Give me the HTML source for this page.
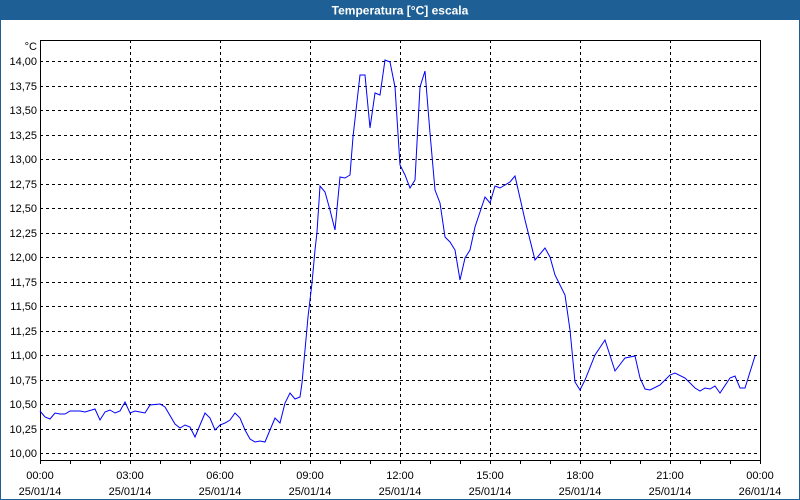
<!DOCTYPE html>
<html><head><meta charset="utf-8"><style>
html,body{margin:0;padding:0;width:800px;height:500px;overflow:hidden;background:#fff}
svg{display:block}
text{font-family:"Liberation Sans",sans-serif;font-size:11px;fill:#000}
</style></head><body>
<svg width="800" height="500" viewBox="0 0 800 500" xmlns="http://www.w3.org/2000/svg">
<rect x="0" y="0" width="800" height="500" fill="#fff"/>
<rect x="0" y="0" width="800" height="20" fill="#1e6096"/>
<rect x="0" y="20" width="1" height="480" fill="#1e6096"/>
<rect x="799" y="20" width="1" height="480" fill="#1e6096"/>
<rect x="0" y="499" width="800" height="1" fill="#1e6096"/>
<text x="400" y="14.5" text-anchor="middle" style="fill:#fff;font-weight:bold;font-size:12px">Temperatura [°C] escala</text>
<g stroke="#000" stroke-dasharray="3,3" stroke-width="1" shape-rendering="crispEdges">
<line x1="40" x2="760" y1="61.5" y2="61.5"/><line x1="40" x2="760" y1="86.5" y2="86.5"/><line x1="40" x2="760" y1="110.5" y2="110.5"/><line x1="40" x2="760" y1="135.5" y2="135.5"/><line x1="40" x2="760" y1="159.5" y2="159.5"/><line x1="40" x2="760" y1="184.5" y2="184.5"/><line x1="40" x2="760" y1="208.5" y2="208.5"/><line x1="40" x2="760" y1="233.5" y2="233.5"/><line x1="40" x2="760" y1="257.5" y2="257.5"/><line x1="40" x2="760" y1="282.5" y2="282.5"/><line x1="40" x2="760" y1="306.5" y2="306.5"/><line x1="40" x2="760" y1="331.5" y2="331.5"/><line x1="40" x2="760" y1="355.5" y2="355.5"/><line x1="40" x2="760" y1="380.5" y2="380.5"/><line x1="40" x2="760" y1="404.5" y2="404.5"/><line x1="40" x2="760" y1="429.5" y2="429.5"/><line x1="40" x2="760" y1="453.5" y2="453.5"/>
<line x1="130.5" x2="130.5" y1="40" y2="460"/><line x1="220.5" x2="220.5" y1="40" y2="460"/><line x1="310.5" x2="310.5" y1="40" y2="460"/><line x1="400.5" x2="400.5" y1="40" y2="460"/><line x1="490.5" x2="490.5" y1="40" y2="460"/><line x1="580.5" x2="580.5" y1="40" y2="460"/><line x1="670.5" x2="670.5" y1="40" y2="460"/>
</g>
<g stroke="#000" stroke-width="1" fill="none" shape-rendering="crispEdges">
<rect x="40.5" y="40.5" width="720" height="420"/>
<path d="M40.5 460v4M70.5 460v4M100.5 460v4M130.5 460v4M160.5 460v4M190.5 460v4M220.5 460v4M250.5 460v4M280.5 460v4M310.5 460v4M340.5 460v4M370.5 460v4M400.5 460v4M430.5 460v4M460.5 460v4M490.5 460v4M520.5 460v4M550.5 460v4M580.5 460v4M610.5 460v4M640.5 460v4M670.5 460v4M700.5 460v4M730.5 460v4M760.5 460v4"/>
</g>
<polyline fill="none" stroke="#0000ff" stroke-width="1" points="40,411 45,417 50,419 55,413 60,414 65,414 70,411 80,411 85,412 95,409 100,420 105,412 110,410 115,413 120,411 125,402 130,413 135,411 140,412 145,413 150,405 160,404 165,407 175,424 180,428 185,425 190,427 195,437 205,413 210,418 215,430 220,425 225,423 230,420 235,413 240,418 245,430 250,439 255,442 260,441 265,442 270,430 275,418 280,423 285,403 290,393 295,399 300,397 302,383 305,350 308,317 312,283 315,250 317,232 320,186 325,192 330,210 335,230 340,177 345,178 350,175 353,137 360,75 365,75 370,128 375,93 380,95 385,60 390,62 395,87 400,165 405,175 410,188 415,180 420,87 425,71 430,133 435,190 440,203 445,237 450,242 455,250 460,280 465,258 470,250 475,227 485,197 490,203 495,186 500,188 510,182 515,176 525,220 535,260 545,248 550,257 555,275 565,295 570,330 575,382 580,390 585,380 595,355 605,340 615,371 625,358 635,356 640,378 645,389 650,390 660,385 670,375 675,373 685,378 695,388 700,391 705,388 710,389 715,386 720,393 730,378 735,376 740,388 745,388 755,356"/>
<g text-anchor="end">
<text x="37" y="50">°C</text>
<text x="37" y="65">14,00</text><text x="37" y="90">13,75</text><text x="37" y="114">13,50</text><text x="37" y="139">13,25</text><text x="37" y="163">13,00</text><text x="37" y="188">12,75</text><text x="37" y="212">12,50</text><text x="37" y="237">12,25</text><text x="37" y="261">12,00</text><text x="37" y="286">11,75</text><text x="37" y="310">11,50</text><text x="37" y="335">11,25</text><text x="37" y="359">11,00</text><text x="37" y="384">10,75</text><text x="37" y="408">10,50</text><text x="37" y="433">10,25</text><text x="37" y="457">10,00</text>
</g>
<g text-anchor="middle">
<text x="40" y="479">00:00</text><text x="40" y="495">25/01/14</text>
<text x="130" y="479">03:00</text><text x="130" y="495">25/01/14</text>
<text x="220" y="479">06:00</text><text x="220" y="495">25/01/14</text>
<text x="310" y="479">09:00</text><text x="310" y="495">25/01/14</text>
<text x="400" y="479">12:00</text><text x="400" y="495">25/01/14</text>
<text x="490" y="479">15:00</text><text x="490" y="495">25/01/14</text>
<text x="580" y="479">18:00</text><text x="580" y="495">25/01/14</text>
<text x="670" y="479">21:00</text><text x="670" y="495">25/01/14</text>
<text x="760" y="479">00:00</text><text x="760" y="495">26/01/14</text>
</g>
</svg>
</body></html>
